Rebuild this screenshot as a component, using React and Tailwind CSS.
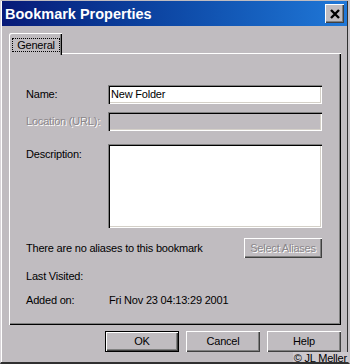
import React from 'react';

const raised = 'shadow-[inset_1px_1px_0_#fff,inset_-1px_-1px_0_#404040,inset_-2px_-2px_0_#808080]';
const panelEdge = 'shadow-[inset_1px_1px_0_#fff,inset_-1px_-1px_0_#000,inset_-2px_-2px_0_#808080]';
const sunken = 'shadow-[inset_1px_1px_0_#808080,inset_2px_2px_0_#000,inset_-1px_-1px_0_#fff,inset_-2px_-2px_0_#d4d0c8]';
const disabledText = 'text-[#8a868a] [text-shadow:1px_1px_0_#fff]';

const Button = ({ children, isDefault }) => (
  <div className={`w-[74px] h-[21px] ${isDefault ? 'border border-black' : ''}`}>
    <div className={`w-full h-full flex items-center justify-center ${raised}`}>{children}</div>
  </div>
);

const App = () => {
  return (
    <div className="relative w-[350px] h-[364px] overflow-hidden bg-[#c0bcc0] border-l border-l-[#d8d4d8] border-r-2 border-r-[#c8c4c8] border-b-2 border-b-[#303030] pt-px text-[11px] tracking-[-0.2px] text-black font-['Liberation_Sans',Arial,sans-serif]">
      <div className="h-full border-l border-l-white border-r border-r-[#303030]">
        {/* title bar */}
        <div className="h-[25px] flex items-center justify-between bg-gradient-to-r from-[#081a78] to-[#2078d8] pl-[3px] pr-[3px]">
          <span className="pt-[2px] text-white font-bold text-[14.5px] tracking-normal leading-none">Bookmark Properties</span>
          <div className={`w-[19px] h-[19px] bg-[#c0bcc0] flex items-center justify-center ${raised}`}>
            <svg width="10" height="10" viewBox="0 0 10 10">
              <path d="M1 1 L9 9 M9 1 L1 9" stroke="#000" strokeWidth="2.4" />
            </svg>
          </div>
        </div>

        {/* tab */}
        <div className="mt-[7px] ml-[7px] relative z-10 -mb-[2px] w-[53px] h-[22px] bg-[#c0bcc0] rounded-tl-[2px] shadow-[inset_1px_1px_0_#fff,inset_-1px_0_0_#000,inset_-2px_0_0_#808080]">
          <div className="absolute left-[3px] top-[5px] w-[48px] h-[14px] border border-dotted border-black flex items-center justify-center leading-none">
            General
          </div>
        </div>

        {/* panel */}
        <div className={`ml-[7px] w-[332px] h-[272px] pt-[32px] pl-[17px] ${panelEdge}`}>
          <div className="grid grid-cols-[82px_214px] w-[296px]">
            <div className="h-[19px] flex items-center">Name:</div>
            <div className={`h-[19px] bg-white flex items-center pl-[3px] ${sunken}`}>New Folder</div>

            <div className={`mt-[8px] h-[19px] flex items-center whitespace-nowrap ${disabledText}`}>Location (URL):</div>
            <div className={`mt-[8px] h-[19px] bg-[#c0bcc0] ${sunken}`} />

            <div className="mt-[13px] pt-[2px] leading-[16px]">Description:</div>
            <div className={`mt-[13px] h-[84px] bg-white ${sunken}`} />
          </div>

          <div className="mt-[10px] w-[296px] h-[20px] flex items-center justify-between">
            <span>There are no aliases to this bookmark</span>
            <div className={`w-[78px] h-[20px] flex items-center justify-center whitespace-nowrap ${raised} ${disabledText}`}>Select Aliases</div>
          </div>

          <div className="mt-[10px] h-[16px] flex items-center">Last Visited:</div>
          <div className="mt-[8px] h-[16px] flex items-center">
            <span className="w-[83px]">Added on:</span>
            <span>Fri Nov 23 04:13:29 2001</span>
          </div>
        </div>

        {/* buttons */}
        <div className="mt-[6px] flex justify-end pr-[6px] gap-[7px]">
          <Button isDefault>OK</Button>
          <Button>Cancel</Button>
          <Button>Help</Button>
        </div>
      </div>

      <div className="absolute right-0 top-[352px] px-px bg-[#cdc9cd] text-[11px] leading-[12px] whitespace-nowrap">© JL Meller</div>
    </div>
  );
};

export default App;
